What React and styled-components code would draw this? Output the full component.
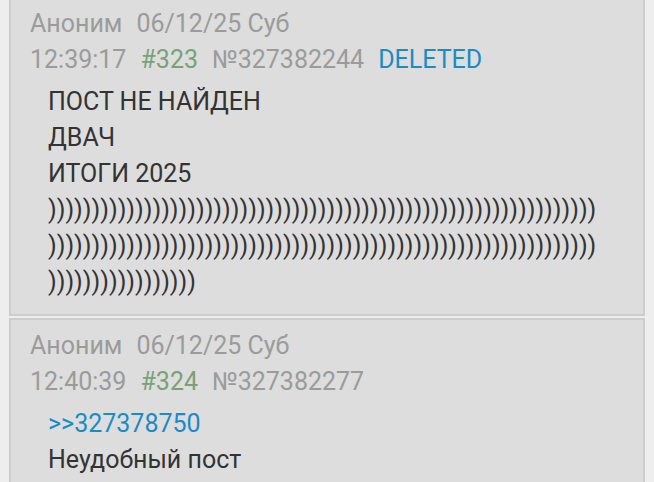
import React from "react";
import styled, { createGlobalStyle } from "styled-components";

const GlobalStyle = createGlobalStyle`
  html, body {
    margin: 0;
    padding: 0;
    background: #eeeeee;
    overflow: hidden;
  }
  body {
    font-family: Roboto, "Noto Sans", sans-serif;
  }
`;

const posts = [
  {
    id: 327382244,
    num: 323,
    name: "Аноним",
    date: "06/12/25 Суб",
    time: "12:39:17",
    deleted: true,
    lines: ["ПОСТ НЕ НАЙДЕН", "ДВАЧ", "ИТОГИ 2025", ")".repeat(143)],
  },
  {
    id: 327382277,
    num: 324,
    name: "Аноним",
    date: "06/12/25 Суб",
    time: "12:40:39",
    reply: 327378750,
    lines: ["Неудобный пост"],
  },
];

const Post = ({ post }) => (
  <Card>
    <Header>
      <Meta>
        <span>{post.name}</span>
        <span>{post.date}</span>
      </Meta>
      <Meta>
        <span>{post.time}</span>
        <Num>#{post.num}</Num>
        <span>№{post.id}</span>
        {post.deleted && <Tag>DELETED</Tag>}
      </Meta>
    </Header>
    <Body>
      {post.reply && <ReplyLink>&gt;&gt;{post.reply}</ReplyLink>}
      {post.lines.map((line, i) => (
        <Line key={i}>{line}</Line>
      ))}
    </Body>
  </Card>
);

export default function App() {
  return (
    <>
      <GlobalStyle />
      <Thread>
        {posts.map((p) => (
          <Post key={p.id} post={p} />
        ))}
      </Thread>
    </>
  );
}

// список постов, прокручен на пару пикселей вниз
const Thread = styled.div`
  display: flex;
  flex-direction: column;
  gap: 2px;
  padding: 0 9px;
  margin-top: -4px;
`;

const Card = styled.div`
  background: #dddddd;
  border: 2px solid #cdcdcd;
  padding: 8px 18px 14px 19px;
`;

const Header = styled.div`
  color: #9b9b9b;
  font-size: 25px;
  line-height: 36px;
`;

const Meta = styled.div`
  display: flex;
  gap: 14px;
  white-space: nowrap;
`;

const Num = styled.span`
  color: #78a278;
`;

const Tag = styled.span`
  color: #1a8bc6;
`;

const Body = styled.div`
  margin: 6px 27px 0 18px;
  color: #333333;
  font-size: 25px;
  line-height: 36px;
`;

const Line = styled.div`
  overflow-wrap: anywhere;
  word-break: break-all;
`;

const ReplyLink = styled.div`
  color: #1a8bc6;
`;
